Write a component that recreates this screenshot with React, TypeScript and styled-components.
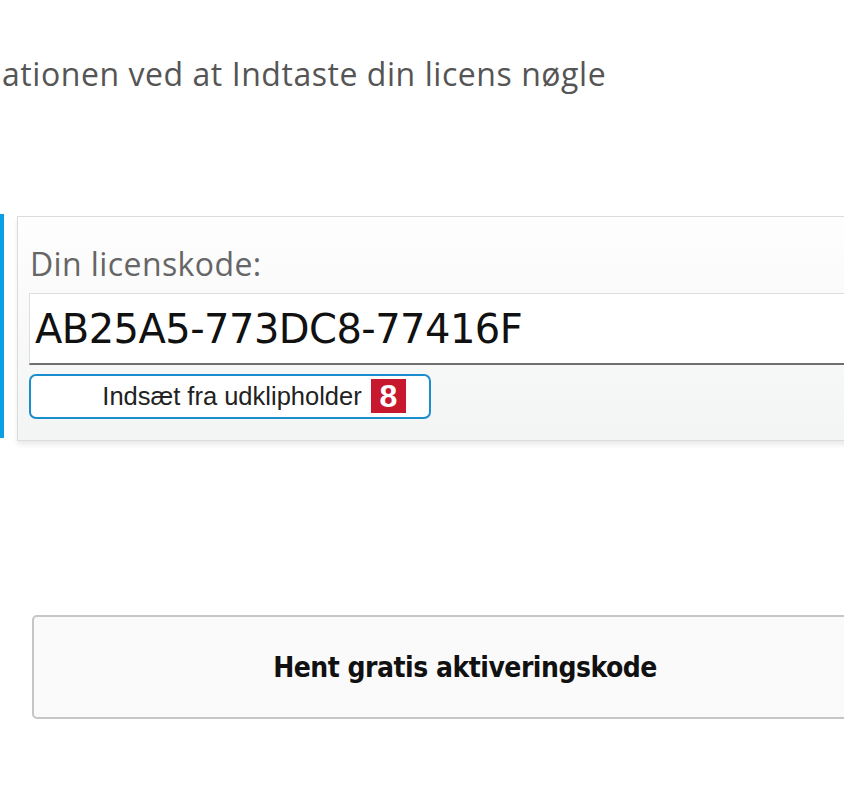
import React from "react";
import styled, { createGlobalStyle } from "styled-components";

const Global = createGlobalStyle`
  html, body {
    margin: 0;
    padding: 0;
    background: #ffffff;
    overflow: hidden;
  }
  body {
    width: 844px;
    height: 800px;
  }
`;

const Page = styled.div`
  width: 844px;
  height: 800px;
  overflow: hidden;
  display: flex;
  flex-direction: column;
`;

const Intro = styled.p`
  margin: 54px 0 0 2px;
  font-family: "Open Sans", "Noto Sans", sans-serif;
  font-size: 32px;
  line-height: 40px;
  letter-spacing: 0.55px;
  color: #555555;
  white-space: nowrap;
`;

const Section = styled.div`
  display: flex;
  align-items: flex-start;
  gap: 13px;
  margin-top: 122px;
`;

const AccentBar = styled.div`
  width: 4px;
  height: 224px;
  margin-top: -2px;
  background: #0aa1e2;
  flex-shrink: 0;
`;

const Panel = styled.div`
  width: 900px;
  flex-shrink: 0;
  box-sizing: border-box;
  height: 225px;
  padding: 27px 0 0 11px;
  border: 1px solid #dcdcdc;
  border-right: none;
  background: linear-gradient(#fefefe, #f3f4f4);
  box-shadow: 0 4px 5px rgba(0, 0, 0, 0.08);
  display: flex;
  flex-direction: column;
`;

const Label = styled.div`
  font-family: "Open Sans", "Noto Sans", sans-serif;
  font-size: 32px;
  line-height: 40px;
  letter-spacing: 0.4px;
  color: #666666;
  padding-left: 1px;
`;

const CodeField = styled.div`
  margin-top: 9px;
  height: 72px;
  box-sizing: border-box;
  background: #ffffff;
  border-top: 1px solid #dedede;
  border-left: 1px solid #dedede;
  border-bottom: 2px solid #6f6f6f;
  display: flex;
  align-items: center;
  padding-left: 5px;
  font-family: "DejaVu Sans", Verdana, sans-serif;
  font-size: 40px;
  color: #111111;
  letter-spacing: -0.55px;
`;

const PasteButton = styled.button`
  position: relative;
  margin-top: 9px;
  width: 402px;
  height: 45px;
  box-sizing: border-box;
  border: 2px solid #1b8ed0;
  border-radius: 7px;
  background: #ffffff;
  font-family: "Liberation Sans", Arial, sans-serif;
  font-size: 25.5px;
  color: #222222;
  padding: 0 0 0 4px;
  display: flex;
  align-items: center;
  justify-content: center;
`;

const Badge = styled.span`
  position: absolute;
  left: 340px;
  top: 3px;
  width: 35px;
  height: 34px;
  background: #c8182e;
  color: #ffffff;
  font-family: "Liberation Sans", Arial, sans-serif;
  font-weight: 700;
  font-size: 32px;
  display: flex;
  align-items: center;
  justify-content: center;
`;

const ActivateButton = styled.button`
  margin: 174px 0 0 32px;
  width: 866px;
  flex-shrink: 0;
  height: 104px;
  box-sizing: border-box;
  border: 2px solid #c6c6c6;
  border-radius: 5px;
  background: #fafafa;
  font-family: "DejaVu Sans Condensed", "DejaVu Sans", sans-serif;
  font-stretch: condensed;
  font-weight: 700;
  font-size: 28px;
  color: #111111;
  letter-spacing: -0.5px;
  padding: 0;
`;

export default function App() {
  return (
    <Page>
      <Global />
      <Intro>ationen ved at Indtaste din licens nøgle</Intro>
      <Section>
        <AccentBar />
        <Panel>
          <Label>Din licenskode:</Label>
          <CodeField>AB25A5-773DC8-77416F</CodeField>
          <PasteButton>
            Indsæt fra udklipholder
            <Badge>8</Badge>
          </PasteButton>
        </Panel>
      </Section>
      <ActivateButton>Hent gratis aktiveringskode</ActivateButton>
    </Page>
  );
}
